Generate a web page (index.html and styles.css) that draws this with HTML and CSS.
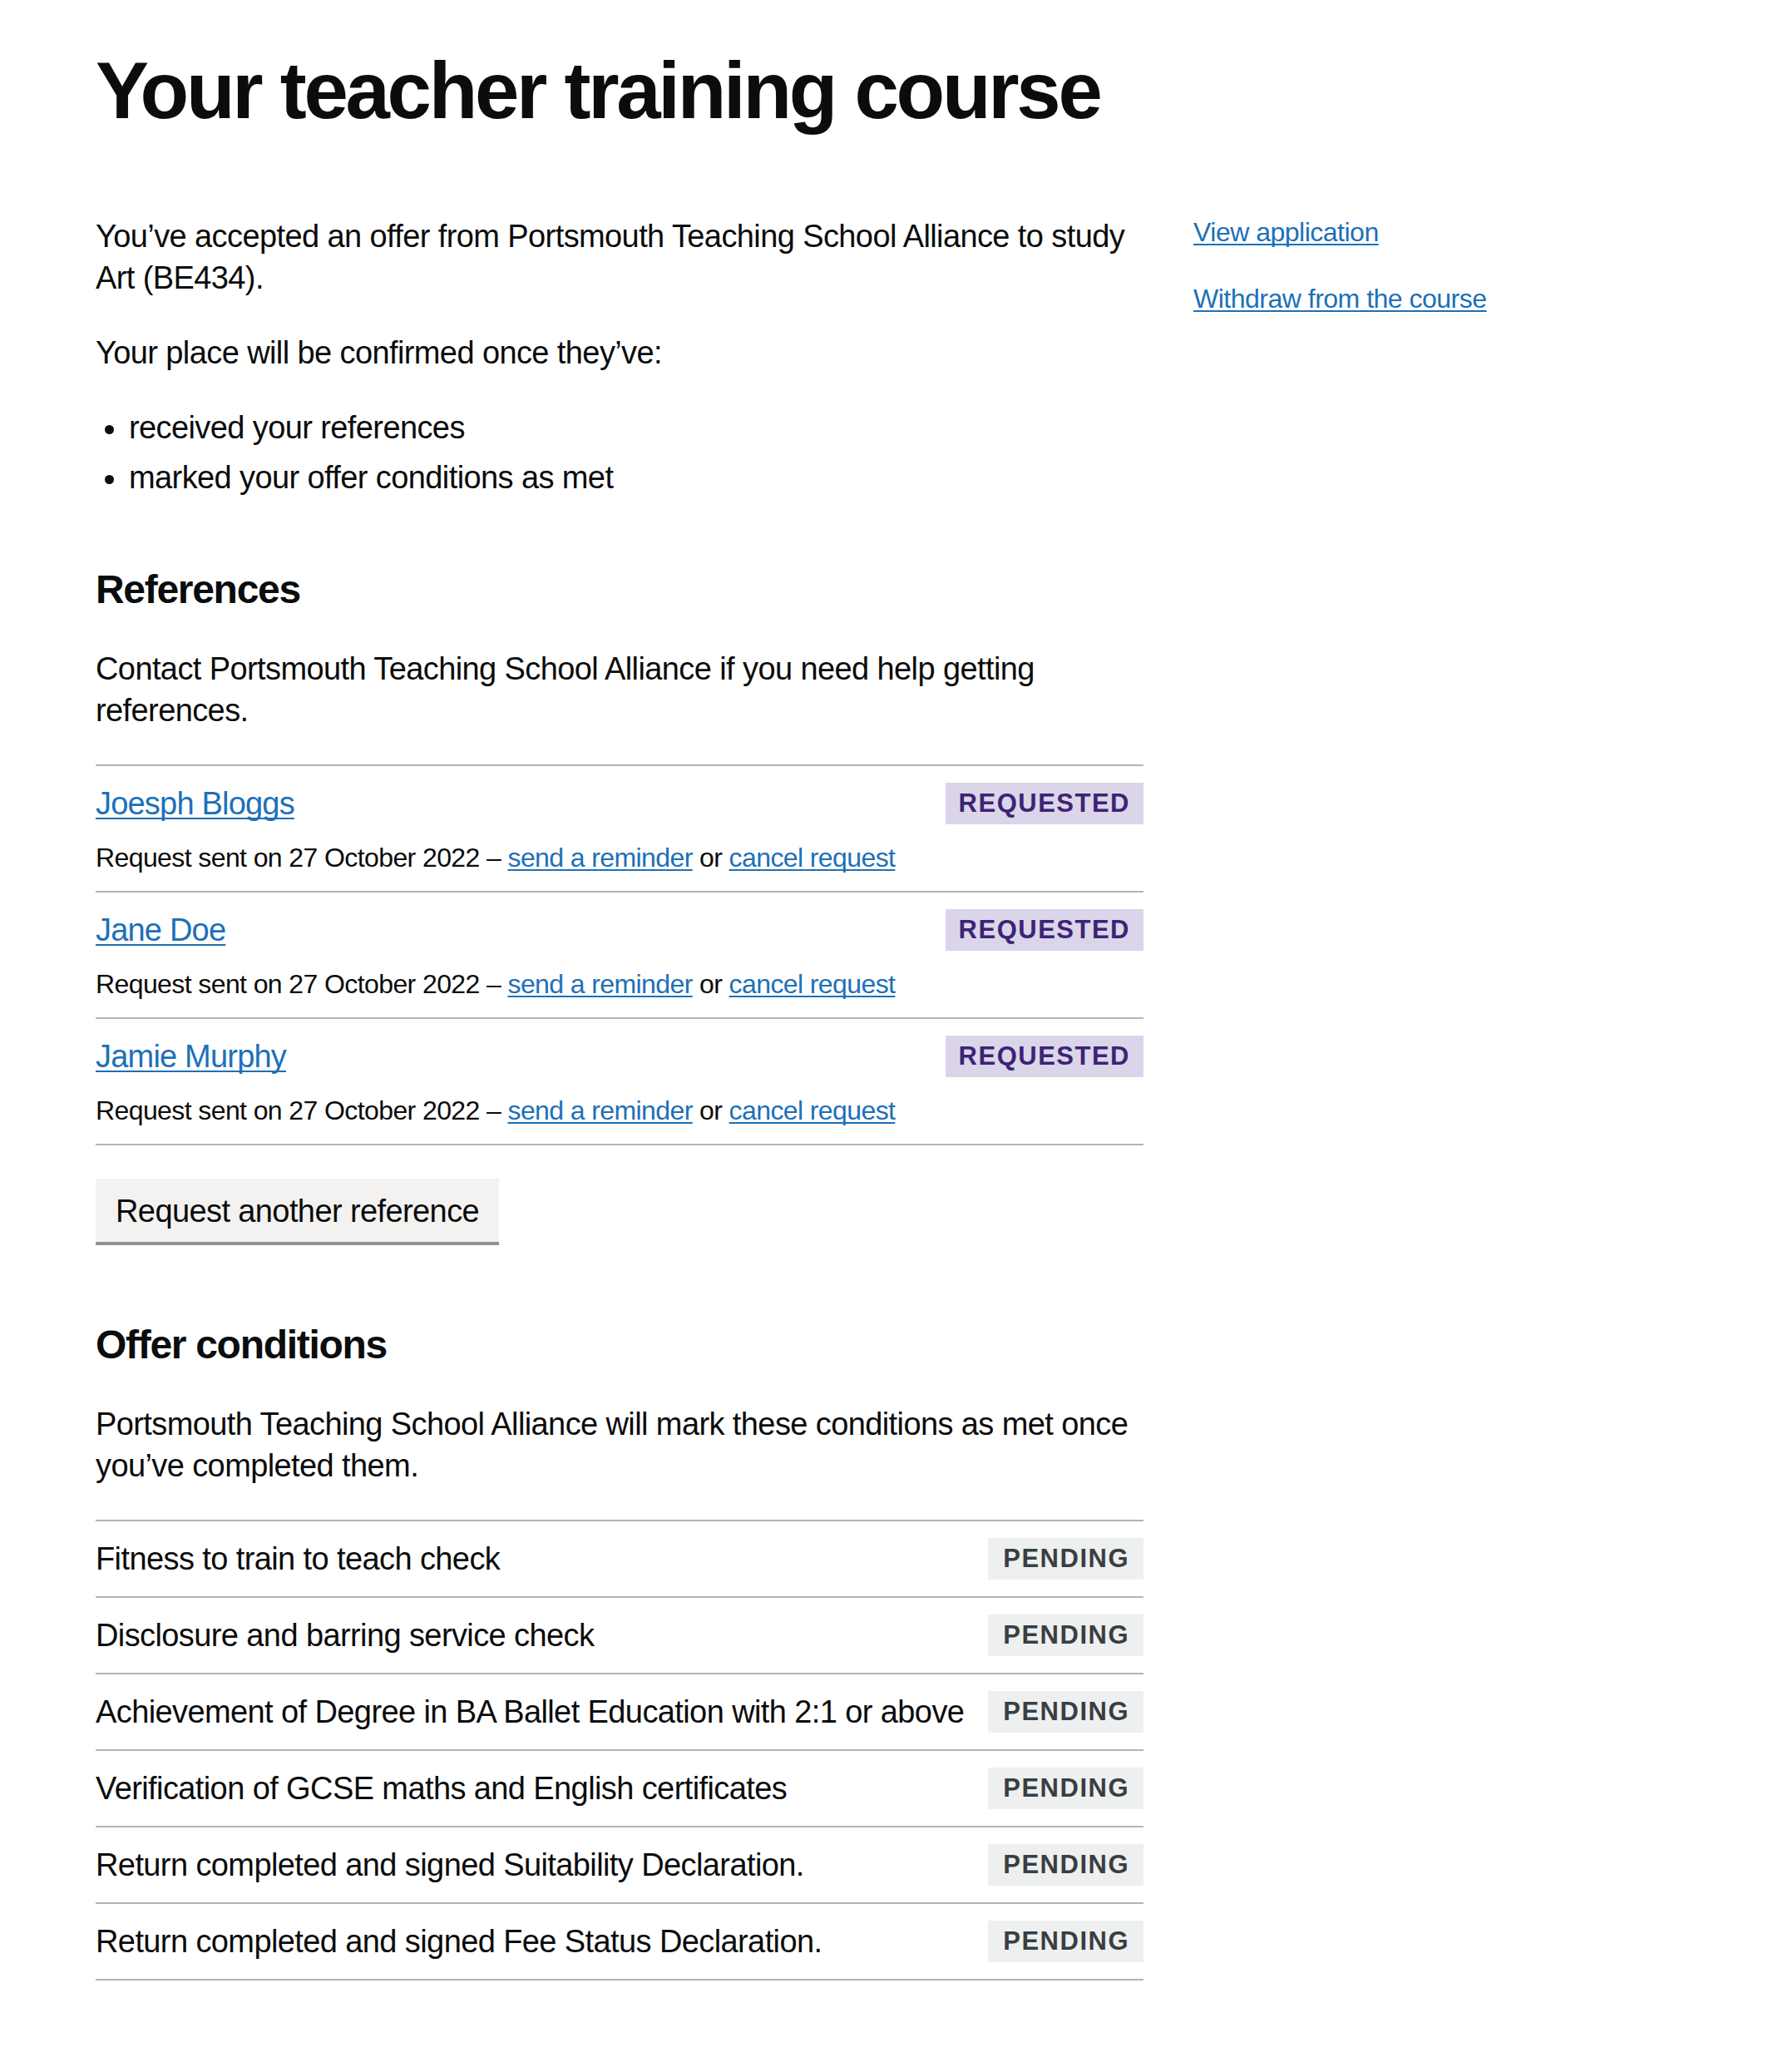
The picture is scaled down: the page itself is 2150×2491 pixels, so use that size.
FILE: index.html
```html
<!DOCTYPE html>
<html lang="en">
<head>
<meta charset="utf-8">
<title>Your teacher training course</title>
<link rel="stylesheet" href="styles.css">
</head>
<body>
<div class="page">
  <h1 class="title">Your teacher training course</h1>
  <div class="grid">
    <div class="main">
      <p class="body">You’ve accepted an offer from Portsmouth Teaching School Alliance to study Art (BE434).</p>
      <p class="body">Your place will be confirmed once they’ve:</p>
      <ul class="bullets">
        <li>received your references</li>
        <li>marked your offer conditions as met</li>
      </ul>

      <h2 class="section-heading">References</h2>
      <p class="body">Contact Portsmouth Teaching School Alliance if you need help getting references.</p>
      <ul class="ref-list">
        <li class="ref-row">
          <div class="ref-info">
            <a class="link ref-name" href="#">Joesph Bloggs</a>
            <p class="ref-meta">Request sent on 27 October 2022 – <a class="link" href="#">send a reminder</a> or <a class="link" href="#">cancel request</a></p>
          </div>
          <strong class="tag tag-purple">Requested</strong>
        </li>
        <li class="ref-row">
          <div class="ref-info">
            <a class="link ref-name" href="#">Jane Doe</a>
            <p class="ref-meta">Request sent on 27 October 2022 – <a class="link" href="#">send a reminder</a> or <a class="link" href="#">cancel request</a></p>
          </div>
          <strong class="tag tag-purple">Requested</strong>
        </li>
        <li class="ref-row">
          <div class="ref-info">
            <a class="link ref-name" href="#">Jamie Murphy</a>
            <p class="ref-meta">Request sent on 27 October 2022 – <a class="link" href="#">send a reminder</a> or <a class="link" href="#">cancel request</a></p>
          </div>
          <strong class="tag tag-purple">Requested</strong>
        </li>
      </ul>
      <button class="button" type="button">Request another reference</button>

      <h2 class="section-heading">Offer conditions</h2>
      <p class="body">Portsmouth Teaching School Alliance will mark these conditions as met once you’ve completed them.</p>
      <ul class="cond-list">
        <li class="cond-row"><span class="cond-text">Fitness to train to teach check</span><strong class="tag tag-grey">Pending</strong></li>
        <li class="cond-row"><span class="cond-text">Disclosure and barring service check</span><strong class="tag tag-grey">Pending</strong></li>
        <li class="cond-row"><span class="cond-text">Achievement of Degree in BA Ballet Education with 2:1 or above</span><strong class="tag tag-grey">Pending</strong></li>
        <li class="cond-row"><span class="cond-text">Verification of GCSE maths and English certificates</span><strong class="tag tag-grey">Pending</strong></li>
        <li class="cond-row"><span class="cond-text">Return completed and signed Suitability Declaration.</span><strong class="tag tag-grey">Pending</strong></li>
        <li class="cond-row"><span class="cond-text">Return completed and signed Fee Status Declaration.</span><strong class="tag tag-grey">Pending</strong></li>
      </ul>
    </div>
    <aside class="side">
      <ul class="side-links">
        <li><a class="link side-link" href="#">View application</a></li>
        <li><a class="link side-link" href="#">Withdraw from the course</a></li>
      </ul>
    </aside>
  </div>
</div>
</body>
</html>
```

FILE: styles.css
```css
html, body {
  margin: 0;
  padding: 0;
  background: #ffffff;
}

body {
  font-family: "Liberation Sans", Arial, sans-serif;
  color: #0b0c0c;
}

.page {
  padding: 59px 0 100px 115px;
}

.title {
  margin: 0 0 100px;
  font-size: 96px;
  line-height: 100px;
  font-weight: 700;
  letter-spacing: -3.3px;
}

.grid {
  display: grid;
  grid-template-columns: 1260px 570px;
  column-gap: 60px;
  align-items: start;
}

.main {
  min-width: 0;
}

.body {
  margin: 0 0 40px;
  font-size: 38px;
  line-height: 50px;
  letter-spacing: -0.6px;
}

.bullets {
  margin: 0 0 80px;
  padding-left: 40px;
  list-style: disc;
  font-size: 38px;
  line-height: 50px;
  letter-spacing: -0.6px;
}

.bullets li + li {
  margin-top: 10px;
}

.section-heading {
  margin: 0 0 40px;
  font-size: 48px;
  line-height: 60px;
  font-weight: 700;
  letter-spacing: -1.3px;
}

.link {
  color: #1d70b8;
  text-decoration: underline;
  text-decoration-thickness: 2px;
  text-underline-offset: 0.1em;
  text-decoration-skip-ink: none;
}

.ref-list,
.cond-list {
  list-style: none;
  margin: 1px 0 40px;
  padding: 0;
}

.cond-list {
  margin: 2px 0 0;
}

.ref-row,
.cond-row {
  display: flex;
  justify-content: space-between;
  align-items: flex-start;
  border-top: 2px solid #b1b4b6;
  padding: 20px 0;
}

.ref-row:last-child,
.cond-row:last-child {
  border-bottom: 2px solid #b1b4b6;
}

.ref-info {
  display: flex;
  flex-direction: column;
  gap: 20px;
}

.ref-name {
  font-size: 38px;
  line-height: 50px;
  letter-spacing: -0.8px;
  align-self: flex-start;
}

.ref-meta {
  margin: 0;
  font-size: 32px;
  line-height: 40px;
  letter-spacing: -0.6px;
}

.cond-text {
  font-size: 38px;
  line-height: 50px;
  letter-spacing: -0.6px;
}

.tag {
  display: inline-block;
  flex: none;
  height: 50px;
  line-height: 50px;
  padding: 0 17px 0 18px;
  font-size: 31px;
  font-weight: 700;
  letter-spacing: 1.5px;
  text-transform: uppercase;
}

.tag-purple {
  color: #3d2375;
  background: #dbd5e9;
  padding: 0 16px 0 16px;
}

.tag-grey {
  color: #383f43;
  background: #eeefef;
}

.button {
  display: block;
  margin: 0 0 94px;
  padding: 16px 20px 14px;
  border: 4px solid transparent;
  border-radius: 0;
  background: #f3f2f1;
  box-shadow: 0 4px 0 #929191;
  color: #0b0c0c;
  font-family: "Liberation Sans", Arial, sans-serif;
  font-size: 38px;
  line-height: 38px;
  letter-spacing: -0.6px;
  cursor: pointer;
}

.side-links {
  list-style: none;
  margin: 0;
  padding: 0;
}

.side-links li + li {
  margin-top: 40px;
}

.side-link {
  font-size: 32px;
  line-height: 40px;
  letter-spacing: -0.5px;
}
```
